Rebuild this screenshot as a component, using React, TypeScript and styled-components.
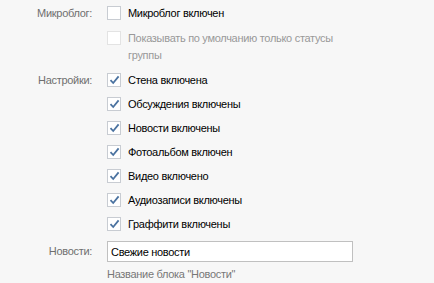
import styled, { createGlobalStyle } from 'styled-components';

const GlobalStyle = createGlobalStyle`
	body {
		margin: 0;
		background: #f7f7f7;
		font-family: Tahoma, "Liberation Sans", Arial, sans-serif;
		font-size: 11px;
		letter-spacing: -0.3px;
	}
`;

const Form = styled.div`
	display: grid;
	grid-template-columns: 92px 1fr;
	column-gap: 15px;
	row-gap: 9px;
	padding-top: 6px;
	width: 434px;
`;

const Label = styled.div<{ $top?: number }>`
	color: #6f6f6f;
	text-align: right;
	padding-top: ${({ $top }) => $top ?? 0}px;
	line-height: 14px;
`;

const Options = styled.div`
	display: flex;
	flex-direction: column;
	gap: 10px;
`;

const Option = styled.label<{ $disabled?: boolean }>`
	display: flex;
	align-items: flex-start;
	gap: 7px;
	color: ${({ $disabled }) => ($disabled ? '#999' : '#000')};
	line-height: 14px;
`;

const Text = styled.span<{ $tall?: boolean }>`
	max-width: 215px;
	line-height: ${({ $tall }) => ($tall ? 17 : 14)}px;
`;

const Box = styled.span<{ $disabled?: boolean; $tall?: boolean }>`
	flex: none;
	width: 12px;
	height: 12px;
	margin-top: ${({ $tall }) => ($tall ? 1 : 0)}px;
	background: #fff;
	border: 1px solid ${({ $disabled }) => ($disabled ? '#e3e3e3' : '#c8ccd2')};
	display: flex;
	align-items: center;
	justify-content: center;
`;

const Field = styled.div`
	display: flex;
	flex-direction: column;
	gap: 5px;
	padding-top: 1px;
`;

const Input = styled.input`
	width: 246px;
	height: 21px;
	box-sizing: border-box;
	border: 1px solid #c0c0c0;
	background: #fff;
	padding: 2px 3px;
	font-family: inherit;
	font-size: 11px;
	letter-spacing: inherit;
	color: #000;
	outline: none;
`;

const Hint = styled.div`
	color: #777;
	line-height: 14px;
`;

function Check() {
	return (
		<svg width="11" height="10" viewBox="0 0 11 10">
			<path d="M1.5 5.2 L4.2 8 L9.6 1.4" fill="none" stroke="#4a72a0" strokeWidth="1.8" />
		</svg>
	);
}

type CheckItemProps = { text: string; checked?: boolean; disabled?: boolean; tall?: boolean };

function CheckItem({ text, checked, disabled, tall }: CheckItemProps) {
	return (
		<Option $disabled={disabled}>
			<Box $disabled={disabled} $tall={tall}>{checked && <Check />}</Box>
			<Text $tall={tall}>{text}</Text>
		</Option>
	);
}

const settings = [
	'Стена включена',
	'Обсуждения включены',
	'Новости включены',
	'Фотоальбом включен',
	'Видео включено',
	'Аудиозаписи включены',
	'Граффити включены',
];

export default function App() {
	return (
		<>
			<GlobalStyle />
			<Form>
				<Label>Микроблог:</Label>
				<Options>
					<CheckItem text="Микроблог включен" />
					<CheckItem text="Показывать по умолчанию только статусы группы" disabled tall />
				</Options>
				<Label>Настройки:</Label>
				<Options>
					{settings.map((s) => (
						<CheckItem key={s} text={s} checked />
					))}
				</Options>
				<Label $top={4}>Новости:</Label>
				<Field>
					<Input defaultValue="Свежие новости" />
					<Hint>Название блока "Новости"</Hint>
				</Field>
			</Form>
		</>
	);
}
